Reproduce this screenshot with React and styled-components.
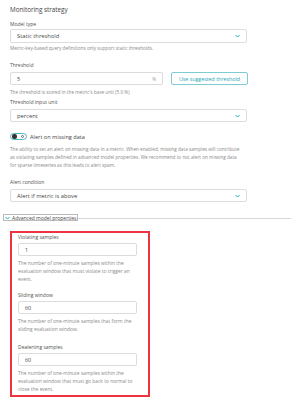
import React from "react";
import styled, { createGlobalStyle } from "styled-components";

const Global = createGlobalStyle`
  html, body { margin: 0; padding: 0; background: #fff; }
  body { font-family: "Open Sans", "Noto Sans", sans-serif; color: #454646; }
  * { box-sizing: border-box; }
`;

const Page = styled.div`
  width: 291px;
  height: 400px;
  padding: 6px 0 0 10px;
  overflow: hidden;
  display: flex;
  flex-direction: column;
`;

const Title = styled.div`
  font-size: 6.3px;
  line-height: 8px;
  font-weight: 500;
  color: #3f3f3f;
  margin-bottom: 7px;
`;

const Label = styled.div`
  font-size: 5px;
  line-height: 6px;
  color: #505050;
  margin-bottom: ${(p) => p.$mb ?? 2}px;
  margin-top: ${(p) => p.$mt ?? 0}px;
`;

const Help = styled.div`
  font-size: ${(p) => p.$fs ?? 4.7}px;
  line-height: ${(p) => p.$lh ?? 6}px;
  color: #8a8a8a;
  margin-top: ${(p) => p.$mt ?? 2}px;
  width: ${(p) => p.$w ?? "auto"};
`;

const SelectBox = styled.div`
  width: ${(p) => p.$w ?? 237}px;
  height: ${(p) => p.$h ?? 14}px;
  border: 1px solid #dcdcdc;
  border-radius: 2px;
  display: flex;
  align-items: center;
  justify-content: space-between;
  padding: 0 6px 0 6px;
  font-size: 5.8px;
  color: #454646;
`;

const Chevron = () => (
  <svg width="5" height="4" viewBox="0 0 10 7">
    <path d="M1 1.5 L5 5.5 L9 1.5" fill="none" stroke="#00a1b2" strokeWidth="1.8" />
  </svg>
);

const Row = styled.div`
  display: flex;
  align-items: center;
  gap: 8px;
`;

const InputBox = styled.div`
  width: ${(p) => p.$w}px;
  height: ${(p) => p.$h ?? 13}px;
  border: 1px solid #dcdcdc;
  border-radius: 2px;
  display: flex;
  align-items: center;
  justify-content: space-between;
  padding: 0 6px 0 6px;
  font-size: 5.4px;
  color: #454646;
`;

const Unit = styled.span`
  color: #999;
  font-size: 4.6px;
`;

const Button = styled.div`
  width: 77px;
  height: 13px;
  border: 1px solid #7fcbd4;
  border-radius: 2px;
  display: flex;
  align-items: center;
  justify-content: center;
  font-size: 5.3px;
  color: #1aa5b4;
`;

const ToggleRow = styled.div`
  display: flex;
  align-items: center;
  gap: 3px;
  margin-top: 11px;
  height: 7px;
  font-size: 5.6px;
  color: #454646;
`;

const Toggle = styled.div`
  width: 17px;
  height: 7px;
  border: 1px solid #4fb8c4;
  border-radius: 4px;
  display: flex;
  align-items: center;
  justify-content: space-between;
  padding: 0 2px 0 1px;
`;

const Knob = styled.div`
  width: 4.5px;
  height: 4.5px;
  border-radius: 50%;
  background: #333;
`;

const OffMark = styled.div`
  width: 3px;
  height: 3px;
  border-radius: 50%;
  border: 0.7px solid #666;
`;

const AdvancedRow = styled.div`
  display: flex;
  align-items: center;
  margin: 12px 0 0 -7px;
`;

const AdvLabel = styled.div`
  display: flex;
  align-items: center;
  gap: 2px;
  height: 7px;
  font-size: 5px;
  color: #454646;
  padding: 0 1px 0 1px;
  border: 0.5px solid #bbb;
`;

const Rule = styled.div`
  flex: 1;
  height: 1.5px;
  margin-top: 2px;
  background: #d6d6d6;
`;

const RedBox = styled.div`
  width: 140px;
  height: 166px;
  margin-top: 10px;
  border: 2px solid #ee3340;
  padding: 1px 0 0 6px;
  display: flex;
  flex-direction: column;
`;

const Field = styled.div`
  display: flex;
  flex-direction: column;
  margin-bottom: ${(p) => p.$mb ?? 0}px;
`;

const samples = [
  {
    label: "Violating samples",
    value: "1",
    help: "The number of one-minute samples within the evaluation window that must violate to trigger an event.",
    mb: 9,
  },
  {
    label: "Sliding window",
    value: "60",
    help: "The number of one-minute samples that form the sliding evaluation window.",
    mb: 11,
  },
  {
    label: "Dealerting samples",
    value: "60",
    help: "The number of one-minute samples within the evaluation window that must go back to normal to close the event.",
    mb: 0,
  },
];

export default function App() {
  return (
    <>
      <Global />
      <Page>
        <Title>Monitoring strategy</Title>
        <Label>Model type</Label>
        <SelectBox>
          <span>Static threshold</span>
          <Chevron />
        </SelectBox>
        <Help $mt={2}>Metric-key-based query definitions only support static thresholds.</Help>

        <Label $mt={11} $mb={4}>Threshold</Label>
        <Row>
          <InputBox $w={153}>
            <span>5</span>
            <Unit>%</Unit>
          </InputBox>
          <Button>Use suggested threshold</Button>
        </Row>
        <Help $mt={4}>The threshold is stored in the metric's base unit (5.0 %)</Help>
        <Label $mt={4} $mb={4}>Threshold input unit</Label>
        <SelectBox $h={13}>
          <span>percent</span>
          <Chevron />
        </SelectBox>

        <ToggleRow>
          <Toggle>
            <Knob />
            <OffMark />
          </Toggle>
          <span>Alert on missing data</span>
        </ToggleRow>
        <Help $lh={8} $mt={5} $w="234px">
          The ability to set an alert on missing data in a metric. When enabled, missing data samples will contribute
          as violating samples defined in advanced model properties. We recommend to not alert on missing data for
          sparse timeseries as this leads to alert spam.
        </Help>

        <Label $mt={10} $mb={4}>Alert condition</Label>
        <SelectBox $h={13}>
          <span>Alert if metric is above</span>
          <Chevron />
        </SelectBox>

        <AdvancedRow>
          <AdvLabel>
            <Chevron />
            <span>Advanced model properties</span>
          </AdvLabel>
          <Rule />
        </AdvancedRow>

        <RedBox>
          {samples.map((s) => (
            <Field key={s.label} $mb={s.mb}>
              <Label $mb={3}>{s.label}</Label>
              <InputBox $w={119} $h={13}>
                <span>{s.value}</span>
              </InputBox>
              <Help $fs={4.9} $lh={8} $mt={3} $w="124px">{s.help}</Help>
            </Field>
          ))}
        </RedBox>
      </Page>
    </>
  );
}
